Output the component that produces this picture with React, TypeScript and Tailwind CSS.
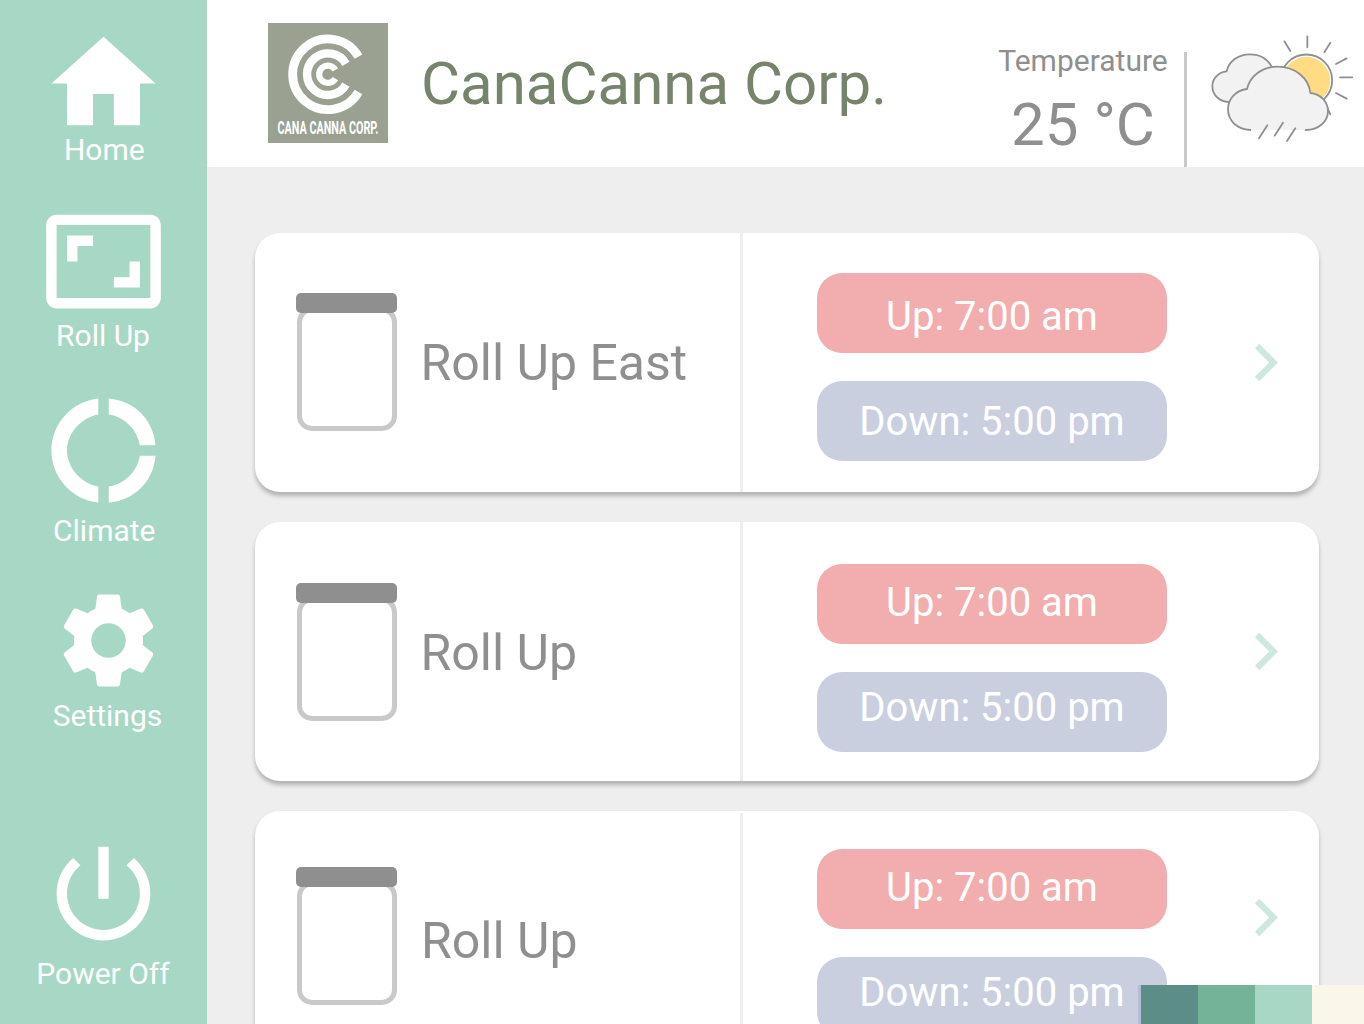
import type { ReactNode } from "react";

type NavItem = {
  label: string;
  path: string;
  gap: string;
  icon: string;
  text: string;
};

const navItems: NavItem[] = [
  {
    label: "Home",
    path: "M10 20v-6h4v6h5v-8h3L12 3 2 12h3v8z",
    gap: "mt-[21px]",
    icon: "size-[125px] ml-[41px]",
    text: "-mt-[11px] w-[208.5px]",
  },
  {
    label: "Roll Up",
    path: "M19 12h-2v3h-3v2h5v-5zM7 9h3V7H5v5h2V9zm14-6H3c-1.1 0-2 .9-2 2v14c0 1.1.9 2 2 2h18c1.1 0 2-.9 2-2V5c0-1.1-.9-2-2-2zm0 16.01H3V4.99h18v14.02z",
    gap: "mt-[34px]",
    icon: "size-[125px] ml-[41px]",
    text: "-mt-[3px] w-[206px]",
  },
  {
    label: "Climate",
    path: "M11 5.08V2c-5 .5-9 4.81-9 10s4 9.5 9 10v-3.08c-3-.48-6-3.4-6-6.92s3-6.44 6-6.92zM18.97 11H22c-.47-5-4-8.53-9-9v3.08C16 5.51 18.54 8 18.97 11zM13 18.92V22c5-.47 8.53-4 9-9h-3.03c-.43 3-2.97 5.49-5.97 5.92z",
    gap: "mt-[37px]",
    icon: "size-[125px] ml-[41px]",
    text: "mt-[3px] w-[208.5px]",
  },
  {
    label: "Settings",
    path: "M19.14 12.94c.04-.3.06-.61.06-.94 0-.32-.02-.64-.07-.94l2.03-1.58c.18-.14.23-.41.12-.61l-1.92-3.32c-.12-.22-.37-.29-.59-.22l-2.39.96c-.5-.38-1.03-.7-1.62-.94l-.36-2.54c-.04-.24-.24-.41-.48-.41h-3.84c-.24 0-.43.17-.47.41l-.36 2.54c-.59.24-1.13.57-1.62.94l-2.39-.96c-.22-.08-.47 0-.59.22L2.74 8.87c-.12.21-.08.47.12.61l2.03 1.58c-.05.3-.09.63-.09.94s.02.64.07.94l-2.03 1.58c-.18.14-.23.41-.12.61l1.92 3.32c.12.22.37.29.59.22l2.39-.96c.5.38 1.03.7 1.62.94l.36 2.54c.05.24.24.41.48.41h3.84c.24 0 .44-.17.47-.41l.36-2.54c.59-.24 1.13-.56 1.62-.94l2.39.96c.22.08.47 0 .59-.22l1.92-3.32c.12-.22.07-.47-.12-.61l-2.01-1.58zM12 15.6c-1.98 0-3.6-1.62-3.6-3.6s1.62-3.6 3.6-3.6 3.6 1.62 3.6 3.6-1.62 3.6-3.6 3.6z",
    gap: "mt-[37px]",
    icon: "size-[115px] ml-[51px]",
    text: "mt-[3px] w-[215px]",
  },
  {
    label: "Power Off",
    path: "M13 3h-2v10h2V3zm4.83 2.17l-1.42 1.42C17.99 7.86 19 9.81 19 12c0 3.87-3.13 7-7 7s-7-3.13-7-7c0-2.19 1.01-4.14 2.58-5.42L6.17 5.17C4.23 6.82 3 9.26 3 12c0 4.97 4.03 9 9 9s9-4.03 9-9c0-2.74-1.23-5.18-3.17-6.83z",
    gap: "mt-[100px]",
    icon: "size-[125px] ml-[41px]",
    text: "mt-[3px] w-[206px]",
  },
];

function Sidebar() {
  return (
    <nav className="flex h-full w-[207px] shrink-0 flex-col bg-[#a7d8c5] text-white">
      {navItems.map((item) => (
        <a key={item.label} className={`flex flex-col ${item.gap}`}>
          <svg viewBox="0 0 24 24" fill="currentColor" className={`shrink-0 ${item.icon}`}>
            <path d={item.path} />
          </svg>
          <span className={`text-center text-[30px] leading-[30px] whitespace-nowrap ${item.text}`}>
            {item.label}
          </span>
        </a>
      ))}
    </nav>
  );
}

function Logo() {
  return (
    <svg viewBox="0 0 120 120" className="size-[120px] shrink-0">
      <rect width="120" height="120" fill="#9aa190" />
      <g fill="none" stroke="#fff" transform="translate(0 0.4)">
        <path d="M90.5 33.2A35.3 35.3 0 1 0 90.5 68.6" strokeWidth="8.8" />
        <path d="M77.9 40.4A20.8 20.8 0 1 0 77.9 61.2" strokeWidth="8.4" />
        <path d="M67.4 46.5A8.7 8.7 0 1 0 67.4 55.2" strokeWidth="6.2" />
      </g>
      <g transform="translate(9.5 110.5) scale(0.57 1)">
        <text
          fill="#fff"
          fontFamily="Roboto"
          fontWeight="700"
          fontSize="18"
          textLength="177"
          lengthAdjust="spacingAndGlyphs"
        >
          CANA CANNA CORP.
        </text>
      </g>
    </svg>
  );
}

function Weather() {
  return (
    <svg viewBox="120 40 432 330" className="h-[110px] w-[144px] shrink-0">
      <g stroke="#8f8f8f" strokeWidth="5.4" strokeLinecap="round" strokeLinejoin="round">
        <circle cx="409" cy="179" r="77.5" fill="#fff" />
        <circle cx="409" cy="180" r="71.5" fill="#ffdc84" stroke="none" />
        <path fill="none" d="M412 47V80M343 62L361 91M481 66L463 95M530 113L498 130M510 170H547M498 217L530 234M472 262L481 281" />
        <path fill="#f2f2f2" d="M183 244C150 246 127 224 127 197C127 173 146 154 170 152C176 122 205 101 240 101C270 101 294 115 307 142L300 244Z" />
        <path fill="#f2f2f2" stroke="none" d="M241 328C200 325 174 300 174 266C174 234 198 209 231 205C240 166 276 138 322 138C375 138 417 172 421 217C452 220 474 243 474 272C474 303 446 328 407 328Z" />
        <path fill="none" d="M241 328C200 325 174 300 174 266C174 234 198 209 231 205C240 166 276 138 322 138C375 138 417 172 421 217C452 220 474 243 474 272C474 303 446 328 407 328" />
        <path fill="none" d="M292 314L267 353M339 306L314 345M376 323L351 361" />
      </g>
    </svg>
  );
}

function Header() {
  return (
    <header className="flex h-[167px] shrink-0 items-start bg-white pl-[61px]">
      <div className="mt-[23px]">
        <Logo />
      </div>
      <h1 className="mt-[54px] ml-[33px] w-[560px] shrink-0 text-[60px] leading-[60px] whitespace-nowrap text-[#76846b]">
        CanaCanna Corp.
      </h1>
      <div className="mt-[46px] flex w-[203px] shrink-0 flex-col items-center pl-px text-[#8f8f8f]">
        <span className="text-[30px] leading-[30px]">Temperature</span>
        <span className="mt-[19px] text-[60px] leading-[60px] whitespace-nowrap">25 °C</span>
      </div>
      <div className="mt-[52px] h-[115px] w-[3px] shrink-0 bg-[#c9c9c9]" />
      <div className="mt-[33.7px] ml-[23px]">
        <Weather />
      </div>
    </header>
  );
}

function Pill({ color, shift, children }: { color: string; shift: string; children: ReactNode }) {
  return (
    <div className={`flex h-20 w-[350px] justify-center rounded-[25px] text-[40px] leading-[40px] text-white ${color}`}>
      <span className={shift}>{children}</span>
    </div>
  );
}

type Roller = {
  name: string;
  rollerTop: string;
  namePlace: string;
  dividerTop: string;
  pillTop: string;
  upText: string;
  downText: string;
  chevronTop: string;
};

const rollers: Roller[] = [
  {
    name: "Roll Up East",
    rollerTop: "mt-[60px]",
    namePlace: "mt-[105px] pl-[23.5px]",
    dividerTop: "mt-0",
    pillTop: "mt-[40px]",
    upText: "mt-[24px]",
    downText: "mt-[21px]",
    chevronTop: "mt-[92px]",
  },
  {
    name: "Roll Up",
    rollerTop: "mt-[61px]",
    namePlace: "mt-[106px] pl-[23.5px]",
    dividerTop: "mt-0",
    pillTop: "mt-[42px]",
    upText: "mt-[19px]",
    downText: "mt-[16px]",
    chevronTop: "mt-[92px]",
  },
  {
    name: "Roll Up",
    rollerTop: "mt-[56px]",
    namePlace: "mt-[105px] pl-[24px]",
    dividerTop: "mt-[2px]",
    pillTop: "mt-[38px]",
    upText: "mt-[19px]",
    downText: "mt-[16px]",
    chevronTop: "mt-[69px]",
  },
];

function RollerCard({ roller }: { roller: Roller }) {
  return (
    <section className="flex h-[259px] w-[1064px] shrink-0 items-start rounded-[25px] bg-white shadow-[0_4px_4px_rgba(0,0,0,0.25)]">
      <div className={`ml-[41px] flex w-[101px] flex-col items-end ${roller.rollerTop}`}>
        <div className="z-10 h-5 w-[101px] rounded-[5px] bg-[#8f8f8f]" />
        <div className="-mt-[6px] h-[124px] w-[100px] rounded-[15px] border-[5px] border-[#c9c9c9]" />
      </div>
      <h2 className={`w-[343px] text-[50px] leading-[50px] whitespace-nowrap text-[#8f8f8f] ${roller.namePlace}`}>
        {roller.name}
      </h2>
      <div className={`w-[3px] self-stretch bg-[#eeeeee] ${roller.dividerTop}`} />
      <div className={`ml-[74px] flex flex-col gap-7 ${roller.pillTop}`}>
        <Pill color="bg-[#f2aeae]" shift={roller.upText}>Up: 7:00 am</Pill>
        <Pill color="bg-[#cacfe0]" shift={roller.downText}>Down: 5:00 pm</Pill>
      </div>
      <svg viewBox="0 0 24 24" className={`ml-[61px] size-[75px] fill-[#cde8df] ${roller.chevronTop}`}>
        <path d="M10 6L8.59 7.41 13.17 12l-4.58 4.59L10 18l6-6z" />
      </svg>
    </section>
  );
}

function Palette() {
  return (
    <div className="absolute right-0 bottom-0 flex h-[39px] w-[226px]">
      <div className="w-[3px] bg-[#b5bcd6]" />
      <div className="w-[57px] bg-[#5d8d87]" />
      <div className="w-[57px] bg-[#75b399]" />
      <div className="w-[57px] bg-[#a8d8c5]" />
      <div className="w-[52px] bg-[#faf6ea]" />
    </div>
  );
}

export default function App() {
  return (
    <div className="relative flex h-[1024px] w-[1364px] overflow-hidden bg-[#eeeeee] font-[Roboto,sans-serif]">
      <Sidebar />
      <div className="flex min-w-0 flex-1 flex-col">
        <Header />
        <main className="flex flex-col gap-[30px] pt-[66px] pl-[48px]">
          {rollers.map((roller, i) => (
            <RollerCard key={i} roller={roller} />
          ))}
        </main>
      </div>
      <Palette />
    </div>
  );
}
